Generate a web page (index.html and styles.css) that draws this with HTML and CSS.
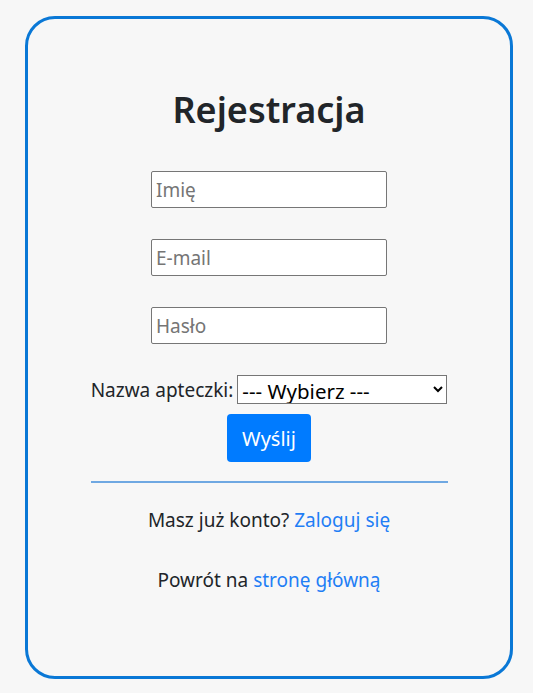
FILE: index.html
```html
<!DOCTYPE html>
<html lang="pl">
<head>
<meta charset="utf-8">
<title>Rejestracja</title>
<link rel="stylesheet" href="styles.css">
</head>
<body>
<div class="card">
  <h1 class="title">Rejestracja</h1>
  <form class="form">
    <input class="field" type="text" placeholder="Imię">
    <input class="field" type="email" placeholder="E-mail">
    <input class="field" type="password" placeholder="Hasło">
    <div class="select-row">
      <label class="label" for="apteczka">Nazwa apteczki:</label>
      <select class="select" id="apteczka">
        <option>--- Wybierz ---</option>
      </select>
    </div>
    <button class="btn" type="button">Wyślij</button>
    <hr class="divider">
    <p class="line">Masz już konto? <a class="link" href="#">Zaloguj się</a></p>
    <p class="line line-second">Powrót na <a class="link" href="#">stronę główną</a></p>
  </form>
</div>
</body>
</html>
```

FILE: styles.css
```css
html, body {
  margin: 0;
  padding: 0;
  background: #f7f7f7;
}

body {
  font-family: "Noto Sans", "Open Sans", sans-serif;
  color: #212529;
  padding: 16px 20px 14px 25px;
}

.card {
  border: 3px solid #0a78d6;
  border-radius: 30px;
  height: 657px;
  display: flex;
  flex-direction: column;
  align-items: center;
}

.title {
  margin: 67px 0 0;
  font-size: 36px;
  font-weight: 600;
  line-height: 48px;
}

.form {
  margin-top: 37px;
  display: flex;
  flex-direction: column;
  align-items: center;
  width: 357px;
}

.field {
  width: 236px;
  height: 37px;
  box-sizing: border-box;
  margin: 0 0 31px;
  padding: 1px 4px;
  font-family: inherit;
  font-size: 19px;
  border: 1px solid #767676;
  border-radius: 2px;
  background: #fff;
}

.field::placeholder {
  color: #757575;
}

.select-row {
  display: flex;
  align-items: center;
  gap: 4px;
  font-size: 19px;
}

.select {
  width: 210px;
  height: 29px;
  font-family: inherit;
  font-size: 20.5px;
  color: #000;
  border: 1px solid #767676;
  border-radius: 0;
  background: #fff;
}

.btn {
  margin-top: 10px;
  width: 84px;
  height: 48px;
  border: none;
  border-radius: 4px;
  background: #007bff;
  color: #fff;
  font-family: inherit;
  font-size: 20px;
}

.divider {
  width: 357px;
  margin: 19px 0 0;
  border: none;
  border-top: 2px solid #6fa8e2;
}

.line {
  margin: 22px 0 0;
  font-size: 19px;
  line-height: 30px;
}

.line-second {
  margin-top: 30px;
}

.link {
  color: #1f7ef5;
  text-decoration: none;
}
```
